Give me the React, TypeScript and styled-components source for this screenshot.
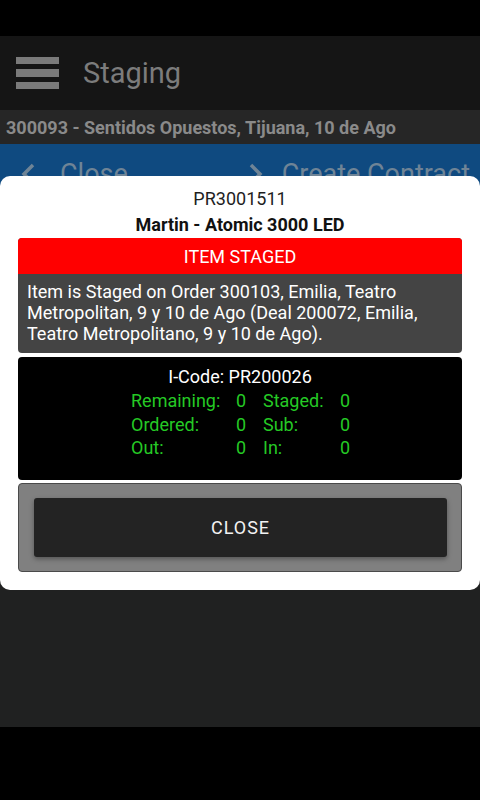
import React from 'react';
import styled, {createGlobalStyle} from 'styled-components';

const GlobalStyle = createGlobalStyle`
  html, body {
    margin: 0;
    padding: 0;
    background: #000;
  }
  body {
    font-family: Roboto, "Noto Sans", Arial, sans-serif;
  }
`;

const Screen = styled.div`
  position: relative;
  width: 480px;
  height: 800px;
  display: flex;
  flex-direction: column;
  background: #000;
  overflow: hidden;
`;

const StatusBar = styled.div`
  height: 36px;
  background: #000;
`;

const Header = styled.div`
  height: 74px;
  display: flex;
  align-items: center;
  gap: 24px;
  padding-left: 16px;
  background: #151515;
`;

const Burger = styled.div`
  width: 43px;
  display: flex;
  flex-direction: column;
  gap: 5px;
`;

const BurgerBar = styled.span`
  display: block;
  height: 7.5px;
  background: #7a7a7a;
`;

const Title = styled.div`
  font-size: 29px;
  color: #7c7c7c;
`;

const SubHeader = styled.div`
  height: 34px;
  display: flex;
  align-items: center;
  padding-left: 6px;
  background: #262626;
  color: #8a8a8a;
  font-size: 18px;
  font-weight: 700;
`;

const NavBar = styled.div`
  height: 60px;
  display: flex;
  align-items: center;
  justify-content: space-between;
  padding: 0 10px 0 20px;
  background: #0f4a80;
  color: #6f8496;
  font-size: 27px;
`;

const NavItem = styled.div<{$gap: number}>`
  display: flex;
  align-items: center;
  gap: ${p => p.$gap}px;
`;

const Content = styled.div`
  flex: 1;
  background: #202121;
`;

const NavBottom = styled.div`
  height: 73px;
  background: #000;
`;

const Dialog = styled.div`
  position: absolute;
  top: 176px;
  left: 0;
  right: 0;
  background: #fff;
  border-radius: 10px;
  padding: 10px 18px 18px;
  display: flex;
  flex-direction: column;
`;

const ItemCode = styled.div`
  text-align: center;
  font-size: 18px;
  line-height: 26px;
  color: #1e1e1e;
`;

const ItemName = styled.div`
  text-align: center;
  font-size: 18px;
  line-height: 25px;
  font-weight: 700;
  color: #111;
  margin-bottom: 1px;
`;

const AlertBox = styled.div`
  border-radius: 4px;
  overflow: hidden;
  background: #444;
`;

const AlertTitle = styled.div`
  height: 36px;
  display: flex;
  align-items: center;
  justify-content: center;
  background: #ff0000;
  color: #fff;
  font-size: 18px;
`;

const AlertText = styled.div`
  padding: 7px 9px 9px;
  color: #fff;
  font-size: 18px;
  line-height: 21px;
`;

const StatsBox = styled.div`
  margin-top: 4px;
  height: 123px;
  box-sizing: border-box;
  padding-top: 8px;
  background: #000;
  border-radius: 4px;
  display: flex;
  flex-direction: column;
  align-items: center;
`;

const StatsTitle = styled.div`
  color: #fff;
  font-size: 18px;
  line-height: 24px;
`;

const StatsGrid = styled.div`
  display: grid;
  grid-template-columns: 100px 15px 89px 15px;
  align-self: flex-start;
  margin-left: 113px;
  color: #25c925;
  font-size: 18px;
  line-height: 23.5px;
`;

const Label = styled.span<{$gap?: boolean}>`
  padding-left: ${p => (p.$gap ? '17px' : '0')};
`;

const Value = styled.span`
  text-align: right;
`;

const ButtonWell = styled.div`
  margin-top: 3px;
  padding: 14px 14px 14px 15px;
  background: #808080;
  border: 1px solid #4a4a4a;
  border-radius: 4px;
`;

const CloseButton = styled.button`
  width: 100%;
  height: 59px;
  border: none;
  border-radius: 3px;
  background: #232323;
  color: #f2f2f2;
  font-family: Roboto, "Noto Sans", Arial, sans-serif;
  font-size: 18px;
  font-weight: 400;
  letter-spacing: 1px;
  box-shadow: 0 2px 5px rgba(0, 0, 0, 0.35);
`;

const Chevron = ({dir}: {dir: 'left' | 'right'}) => (
  <svg width="16" height="24" viewBox="0 0 16 24">
    <path
      d={dir === 'left' ? 'M13 3 L4 12 L13 21' : 'M3 3 L12 12 L3 21'}
      fill="none"
      stroke="#6f8496"
      strokeWidth="3.5"
    />
  </svg>
);

const stats: [string, number, string, number][] = [
  ['Remaining:', 0, 'Staged:', 0],
  ['Ordered:', 0, 'Sub:', 0],
  ['Out:', 0, 'In:', 0],
];

export default function App() {
  return (
    <>
      <GlobalStyle />
      <Screen>
        <StatusBar />
        <Header>
          <Burger>
            <BurgerBar />
            <BurgerBar />
            <BurgerBar />
          </Burger>
          <Title>Staging</Title>
        </Header>
        <SubHeader>300093 - Sentidos Opuestos, Tijuana, 10 de Ago</SubHeader>
        <NavBar>
          <NavItem $gap={24}>
            <Chevron dir="left" />
            Close
          </NavItem>
          <NavItem $gap={18}>
            <Chevron dir="right" />
            Create Contract
          </NavItem>
        </NavBar>
        <Content />
        <NavBottom />

        <Dialog>
          <ItemCode>PR3001511</ItemCode>
          <ItemName>Martin - Atomic 3000 LED</ItemName>
          <AlertBox>
            <AlertTitle>ITEM STAGED</AlertTitle>
            <AlertText>
              Item is Staged on Order 300103, Emilia, Teatro Metropolitan, 9 y 10 de Ago (Deal
              200072, Emilia, Teatro Metropolitano, 9 y 10 de Ago).
            </AlertText>
          </AlertBox>
          <StatsBox>
            <StatsTitle>I-Code: PR200026</StatsTitle>
            <StatsGrid>
              {stats.map(([l1, v1, l2, v2]) => (
                <React.Fragment key={l1}>
                  <Label>{l1}</Label>
                  <Value>{v1}</Value>
                  <Label $gap>{l2}</Label>
                  <Value>{v2}</Value>
                </React.Fragment>
              ))}
            </StatsGrid>
          </StatsBox>
          <ButtonWell>
            <CloseButton>CLOSE</CloseButton>
          </ButtonWell>
        </Dialog>
      </Screen>
    </>
  );
}
